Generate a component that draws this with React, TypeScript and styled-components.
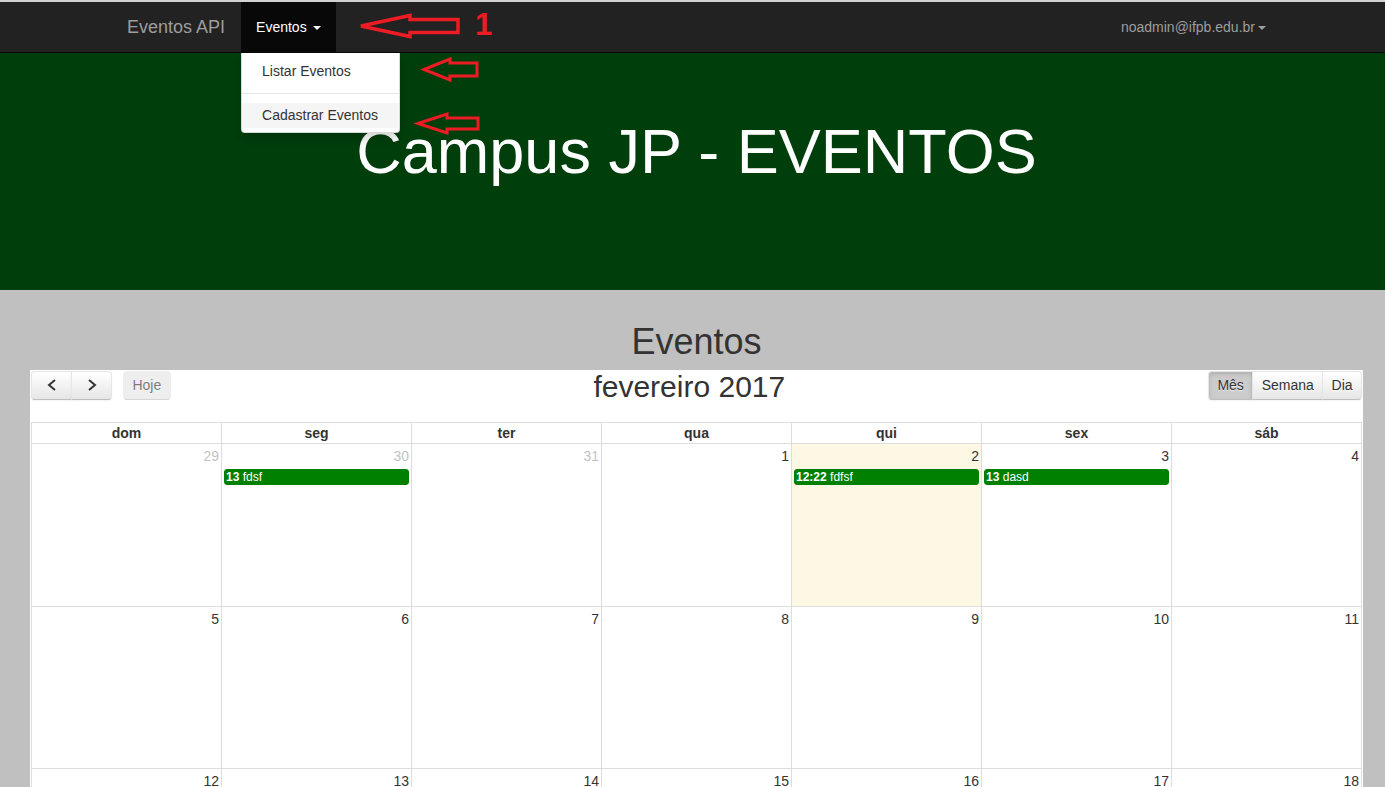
import React from "react";
import styled, { createGlobalStyle } from "styled-components";

const GlobalStyle = createGlobalStyle`
  html, body {
    margin: 0;
    padding: 0;
    overflow: hidden;
  }
  body {
    background: #c0c0c0;
    font-family: "Liberation Sans", Arial, sans-serif;
    font-size: 14px;
    color: #333;
  }
  * { box-sizing: border-box; }
`;

const Page = styled.div`
  position: relative;
  min-height: 787px;
`;

const TopStrip = styled.div`
  height: 2px;
  background: #d2d2d2;
`;

const Navbar = styled.nav`
  display: flex;
  align-items: stretch;
  height: 51px;
  background: #222;
  border-bottom: 1px solid #080808;
  padding: 0 104px 0 112px;
  position: relative;
  z-index: 5;
`;

const Brand = styled.div`
  padding: 15px 16px 15px 15px;
  font-size: 18px;
  line-height: 20px;
  color: #9d9d9d;
`;

const NavItem = styled.div<{ $active?: boolean; $right?: boolean }>`
  position: relative;
  height: 50px;
  padding: 15px;
  line-height: 20px;
  font-size: 14px;
  white-space: nowrap;
  color: ${(p) => (p.$active ? "#fff" : "#9d9d9d")};
  background: ${(p) => (p.$active ? "#080808" : "transparent")};
  margin-left: ${(p) => (p.$right ? "auto" : "0")};
`;

const Caret = styled.span<{ $tight?: boolean }>`
  display: inline-block;
  width: 0;
  height: 0;
  margin-left: ${(p) => (p.$tight ? "3px" : "2px")};
  vertical-align: middle;
  border-top: 4px solid currentColor;
  border-right: 4px solid transparent;
  border-left: 4px solid transparent;
`;

const Dropdown = styled.ul`
  position: absolute;
  top: calc(100% + 1px);
  left: 0;
  width: 159px;
  margin: 0;
  padding: 6px 0 4px;
  list-style: none;
  background: #fff;
  border: 1px solid rgba(0, 0, 0, 0.15);
  border-top: none;
  border-radius: 0 0 4px 4px;
  box-shadow: 0 6px 12px rgba(0, 0, 0, 0.175);
  z-index: 10;
`;

const MenuItem = styled.li<{ $hover?: boolean }>`
  padding: 3px 20px;
  line-height: 19px;
  font-size: 14px;
  color: #333;
  white-space: nowrap;
  background: ${(p) => (p.$hover ? "#f5f5f5" : "transparent")};
`;

const MenuDivider = styled.li`
  height: 1px;
  margin: 9px 0;
  background: #e5e5e5;
`;

const Hero = styled.header`
  height: 237px;
  background: #003f0c;
  padding-top: 64px;
`;

const Container = styled.div`
  margin-left: 30px;
  width: 1333px;
`;

const HeroTitle = styled.h1`
  margin: 0;
  font-size: 63px;
  line-height: 1.1;
  font-weight: normal;
  color: #fff;
  text-align: center;
`;

const SectionTitle = styled.h2`
  margin: 32px 0 8px;
  font-size: 36px;
  line-height: 1.1;
  font-weight: normal;
  color: #333;
  text-align: center;
`;

const Panel = styled.div`
  background: #fff;
`;

const Toolbar = styled.div`
  display: flex;
  align-items: flex-start;
  height: 38px;
  margin-bottom: 14px;
  padding-right: 1px;
`;

const Group = styled.div<{ $gap?: number }>`
  display: flex;
  margin-top: 1px;
  margin-left: ${(p) => p.$gap ?? 0}px;
`;

const Btn = styled.button<{
  $active?: boolean;
  $disabled?: boolean;
  $l?: boolean;
  $r?: boolean;
  $w?: number;
}>`
  height: 29px;
  ${(p) => (p.$w ? `width: ${p.$w}px;` : "")}
  padding: 0 8.4px;
  margin-left: ${(p) => (p.$l ? "0" : "-1px")};
  display: flex;
  align-items: center;
  justify-content: center;
  font-family: "Liberation Sans", Arial, sans-serif;
  font-size: 14px;
  color: #333;
  border: 1px solid;
  border-color: #e6e6e6 #e6e6e6 #bfbfbf;
  border-radius: ${(p) => `${p.$l ? 4 : 0}px ${p.$r ? 4 : 0}px ${p.$r ? 4 : 0}px ${p.$l ? 4 : 0}px`};
  background-color: ${(p) => (p.$active ? "#ccc" : p.$disabled ? "#e6e6e6" : "#f5f5f5")};
  background-image: ${(p) =>
    p.$active || p.$disabled ? "none" : "linear-gradient(to bottom, #fff, #e6e6e6)"};
  box-shadow: ${(p) =>
    p.$active
      ? "inset 0 2px 4px rgba(0,0,0,.15), 0 1px 2px rgba(0,0,0,.05)"
      : p.$disabled
      ? "none"
      : "inset 0 1px 0 rgba(255,255,255,.2), 0 1px 2px rgba(0,0,0,.05)"};
  text-shadow: 0 1px 1px rgba(255, 255, 255, 0.75);
  opacity: ${(p) => (p.$disabled ? 0.65 : 1)};
  cursor: default;
`;

const Title = styled.h2`
  flex: 1;
  margin: 0;
  font-size: 30px;
  line-height: 1.1;
  font-weight: normal;
  color: #333;
  text-align: center;
`;

const Grid = styled.div`
  display: grid;
  grid-template-columns: repeat(7, 190px);
  width: 1331px;
  margin-left: 1px;
  border-top: 1px solid #ddd;
  border-left: 1px solid #ddd;
`;

const HeadCell = styled.div`
  height: 21px;
  border-right: 1px solid #ddd;
  border-bottom: 1px solid #ddd;
  line-height: 20px;
  font-size: 14px;
  font-weight: bold;
  text-align: center;
  color: #333;
`;

const DayCell = styled.div<{ $today?: boolean; $h: number }>`
  height: ${(p) => p.$h}px;
  border-right: 1px solid #ddd;
  border-bottom: 1px solid #ddd;
  background: ${(p) => (p.$today ? "#fcf8e3" : "#fff")};
`;

const DayNumber = styled.div<{ $other?: boolean }>`
  padding: 2px;
  line-height: 20px;
  font-size: 14px;
  text-align: right;
  color: #333;
  opacity: ${(p) => (p.$other ? 0.3 : 1)};
`;

const EventBar = styled.div`
  margin: 1px 2px 0;
  padding: 0 1px;
  height: 16px;
  line-height: 14px;
  font-size: 12px;
  color: #fff;
  background: #008000;
  border: 1px solid #008000;
  border-radius: 3px;
  white-space: nowrap;
  overflow: hidden;
`;

const EventTime = styled.span`
  font-weight: bold;
`;

const Overlay = styled.svg`
  position: absolute;
  top: 0;
  left: 0;
  pointer-events: none;
  z-index: 20;
`;

const Chevron = ({ dir }: { dir: "left" | "right" }) => (
  <svg width="10" height="12" viewBox="0 0 10 12">
    <polyline
      points={dir === "left" ? "8,1 2,6 8,11" : "2,1 8,6 2,11"}
      fill="none"
      stroke="#333"
      strokeWidth="2"
    />
  </svg>
);

type Day = { n: number; other?: boolean; today?: boolean; ev?: [string, string] };

const weeks: Day[][] = [
  [
    { n: 29, other: true },
    { n: 30, other: true, ev: ["13", "fdsf"] },
    { n: 31, other: true },
    { n: 1 },
    { n: 2, today: true, ev: ["12:22", "fdfsf"] },
    { n: 3, ev: ["13", "dasd"] },
    { n: 4 },
  ],
  [5, 6, 7, 8, 9, 10, 11].map((n) => ({ n })),
  [12, 13, 14, 15, 16, 17, 18].map((n) => ({ n })),
  [19, 20, 21, 22, 23, 24, 25].map((n) => ({ n })),
  [
    { n: 26 },
    { n: 27 },
    { n: 28 },
    { n: 1, other: true },
    { n: 2, other: true },
    { n: 3, other: true },
    { n: 4, other: true },
  ],
];

const dayNames = ["dom", "seg", "ter", "qua", "qui", "sex", "sáb"];

const arrowPath = (tipX: number, tipY: number, jointX: number, endX: number, headHalf: number, shaftHalf: number) =>
  [
    [tipX, tipY],
    [jointX, tipY - headHalf],
    [jointX, tipY - shaftHalf],
    [endX, tipY - shaftHalf],
    [endX, tipY + shaftHalf],
    [jointX, tipY + shaftHalf],
    [jointX, tipY + headHalf],
  ]
    .map((p) => p.join(","))
    .join(" ");

export default function App() {
  return (
    <Page>
      <GlobalStyle />
      <TopStrip />
      <Navbar>
        <Brand>Eventos API</Brand>
        <NavItem $active>
          Eventos <Caret />
          <Dropdown>
            <MenuItem>Listar Eventos</MenuItem>
            <MenuDivider />
            <MenuItem $hover>Cadastrar Eventos</MenuItem>
          </Dropdown>
        </NavItem>
        <NavItem $right>
          noadmin@ifpb.edu.br
          <Caret $tight />
        </NavItem>
      </Navbar>
      <Hero>
        <Container>
          <HeroTitle>Campus JP - EVENTOS</HeroTitle>
        </Container>
      </Hero>
      <Container>
        <SectionTitle>Eventos</SectionTitle>
        <Panel>
          <Toolbar>
            <Group>
              <Btn $l $w={41} style={{ marginLeft: 1 }}>
                <Chevron dir="left" />
              </Btn>
              <Btn $r $w={41}>
                <Chevron dir="right" />
              </Btn>
            </Group>
            <Group $gap={11}>
              <Btn $l $r $disabled>
                Hoje
              </Btn>
            </Group>
            <Title>fevereiro 2017</Title>
            <Group>
              <Btn $l $active>
                Mês
              </Btn>
              <Btn>Semana</Btn>
              <Btn $r>Dia</Btn>
            </Group>
          </Toolbar>
          <Grid>
            {dayNames.map((d) => (
              <HeadCell key={d}>{d}</HeadCell>
            ))}
            {weeks.map((w, wi) =>
              w.map((d, di) => (
                <DayCell key={`${wi}-${di}`} $today={d.today} $h={wi === 0 ? 163 : 162}>
                  <DayNumber $other={d.other}>{d.n}</DayNumber>
                  {d.ev && (
                    <EventBar>
                      <EventTime>{d.ev[0]}</EventTime> {d.ev[1]}
                    </EventBar>
                  )}
                </DayCell>
              ))
            )}
          </Grid>
        </Panel>
      </Container>
      <Overlay width="1385" height="160" viewBox="0 0 1385 160">
        <g fill="none" stroke="#ed1c24" strokeWidth="3.5" strokeLinejoin="miter">
          <polygon points={arrowPath(361, 26, 410, 458, 10.5, 6.5)} />
        </g>
        <g fill="none" stroke="#ed1c24" strokeWidth="3" strokeLinejoin="miter">
          <polygon points={arrowPath(424, 69.5, 450, 477, 10.5, 6.5)} />
          <polygon points={arrowPath(418, 123.5, 447, 478, 9.5, 5.5)} />
        </g>
        <text
          x="475"
          y="35"
          fill="#ed1c24"
          fontFamily="Liberation Sans, Arial, sans-serif"
          fontWeight="bold"
          fontSize="31"
        >
          1
        </text>
      </Overlay>
    </Page>
  );
}
